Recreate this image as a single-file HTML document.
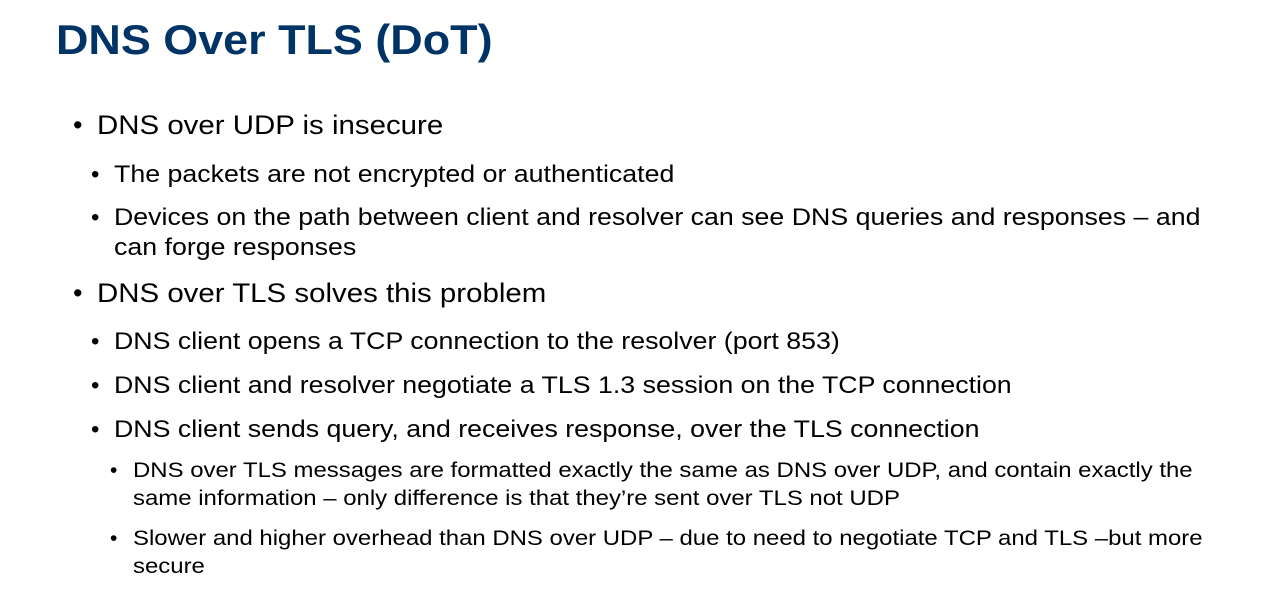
<html><head><style>
body{margin:0;width:1266px;height:611px;background:#fff;font-family:"Liberation Sans",sans-serif;color:#000;position:relative;overflow:hidden}
div{position:absolute;line-height:1;white-space:nowrap;transform-origin:0 0}
.t{left:56px;font-size:42px;font-weight:bold;color:#003366;transform:scaleX(1.069)}
.l1{font-size:27px;left:97px;transform:scaleX(1.09)}
.l2{font-size:24px;left:114px;transform:scaleX(1.114)}
.l3{font-size:21px;left:133px;transform:scaleX(1.14)}
.b1{font-size:27px;left:73px}
.b2{font-size:24px;left:91px}
.b3{font-size:21px;left:110px}
</style></head><body>
<div class="t" style="top:19px">DNS Over TLS (DoT)</div>
<div class="b1" style="top:112px">•</div><div class="l1" style="top:112px">DNS over UDP is insecure</div>
<div class="b2" style="top:163px">•</div><div class="l2" style="top:163px">The packets are not encrypted or authenticated</div>
<div class="b2" style="top:206px">•</div><div class="l2" style="top:206px">Devices on the path between client and resolver can see DNS queries and responses – and</div>
<div class="l2" style="top:236px">can forge responses</div>
<div class="b1" style="top:280px">•</div><div class="l1" style="top:280px">DNS over TLS solves this problem</div>
<div class="b2" style="top:330px">•</div><div class="l2" style="top:330px">DNS client opens a TCP connection to the resolver (port 853)</div>
<div class="b2" style="top:374px">•</div><div class="l2" style="top:374px">DNS client and resolver negotiate a TLS 1.3 session on the TCP connection</div>
<div class="b2" style="top:418px">•</div><div class="l2" style="top:418px">DNS client sends query, and receives response, over the TLS connection</div>
<div class="b3" style="top:460px">•</div><div class="l3" style="top:460px">DNS over TLS messages are formatted exactly the same as DNS over UDP, and contain exactly the</div>
<div class="l3" style="top:488px">same information – only difference is that they’re sent over TLS not UDP</div>
<div class="b3" style="top:528px">•</div><div class="l3" style="top:528px">Slower and higher overhead than DNS over UDP – due to need to negotiate TCP and TLS –but more</div>
<div class="l3" style="top:556px">secure</div>
</body></html>
